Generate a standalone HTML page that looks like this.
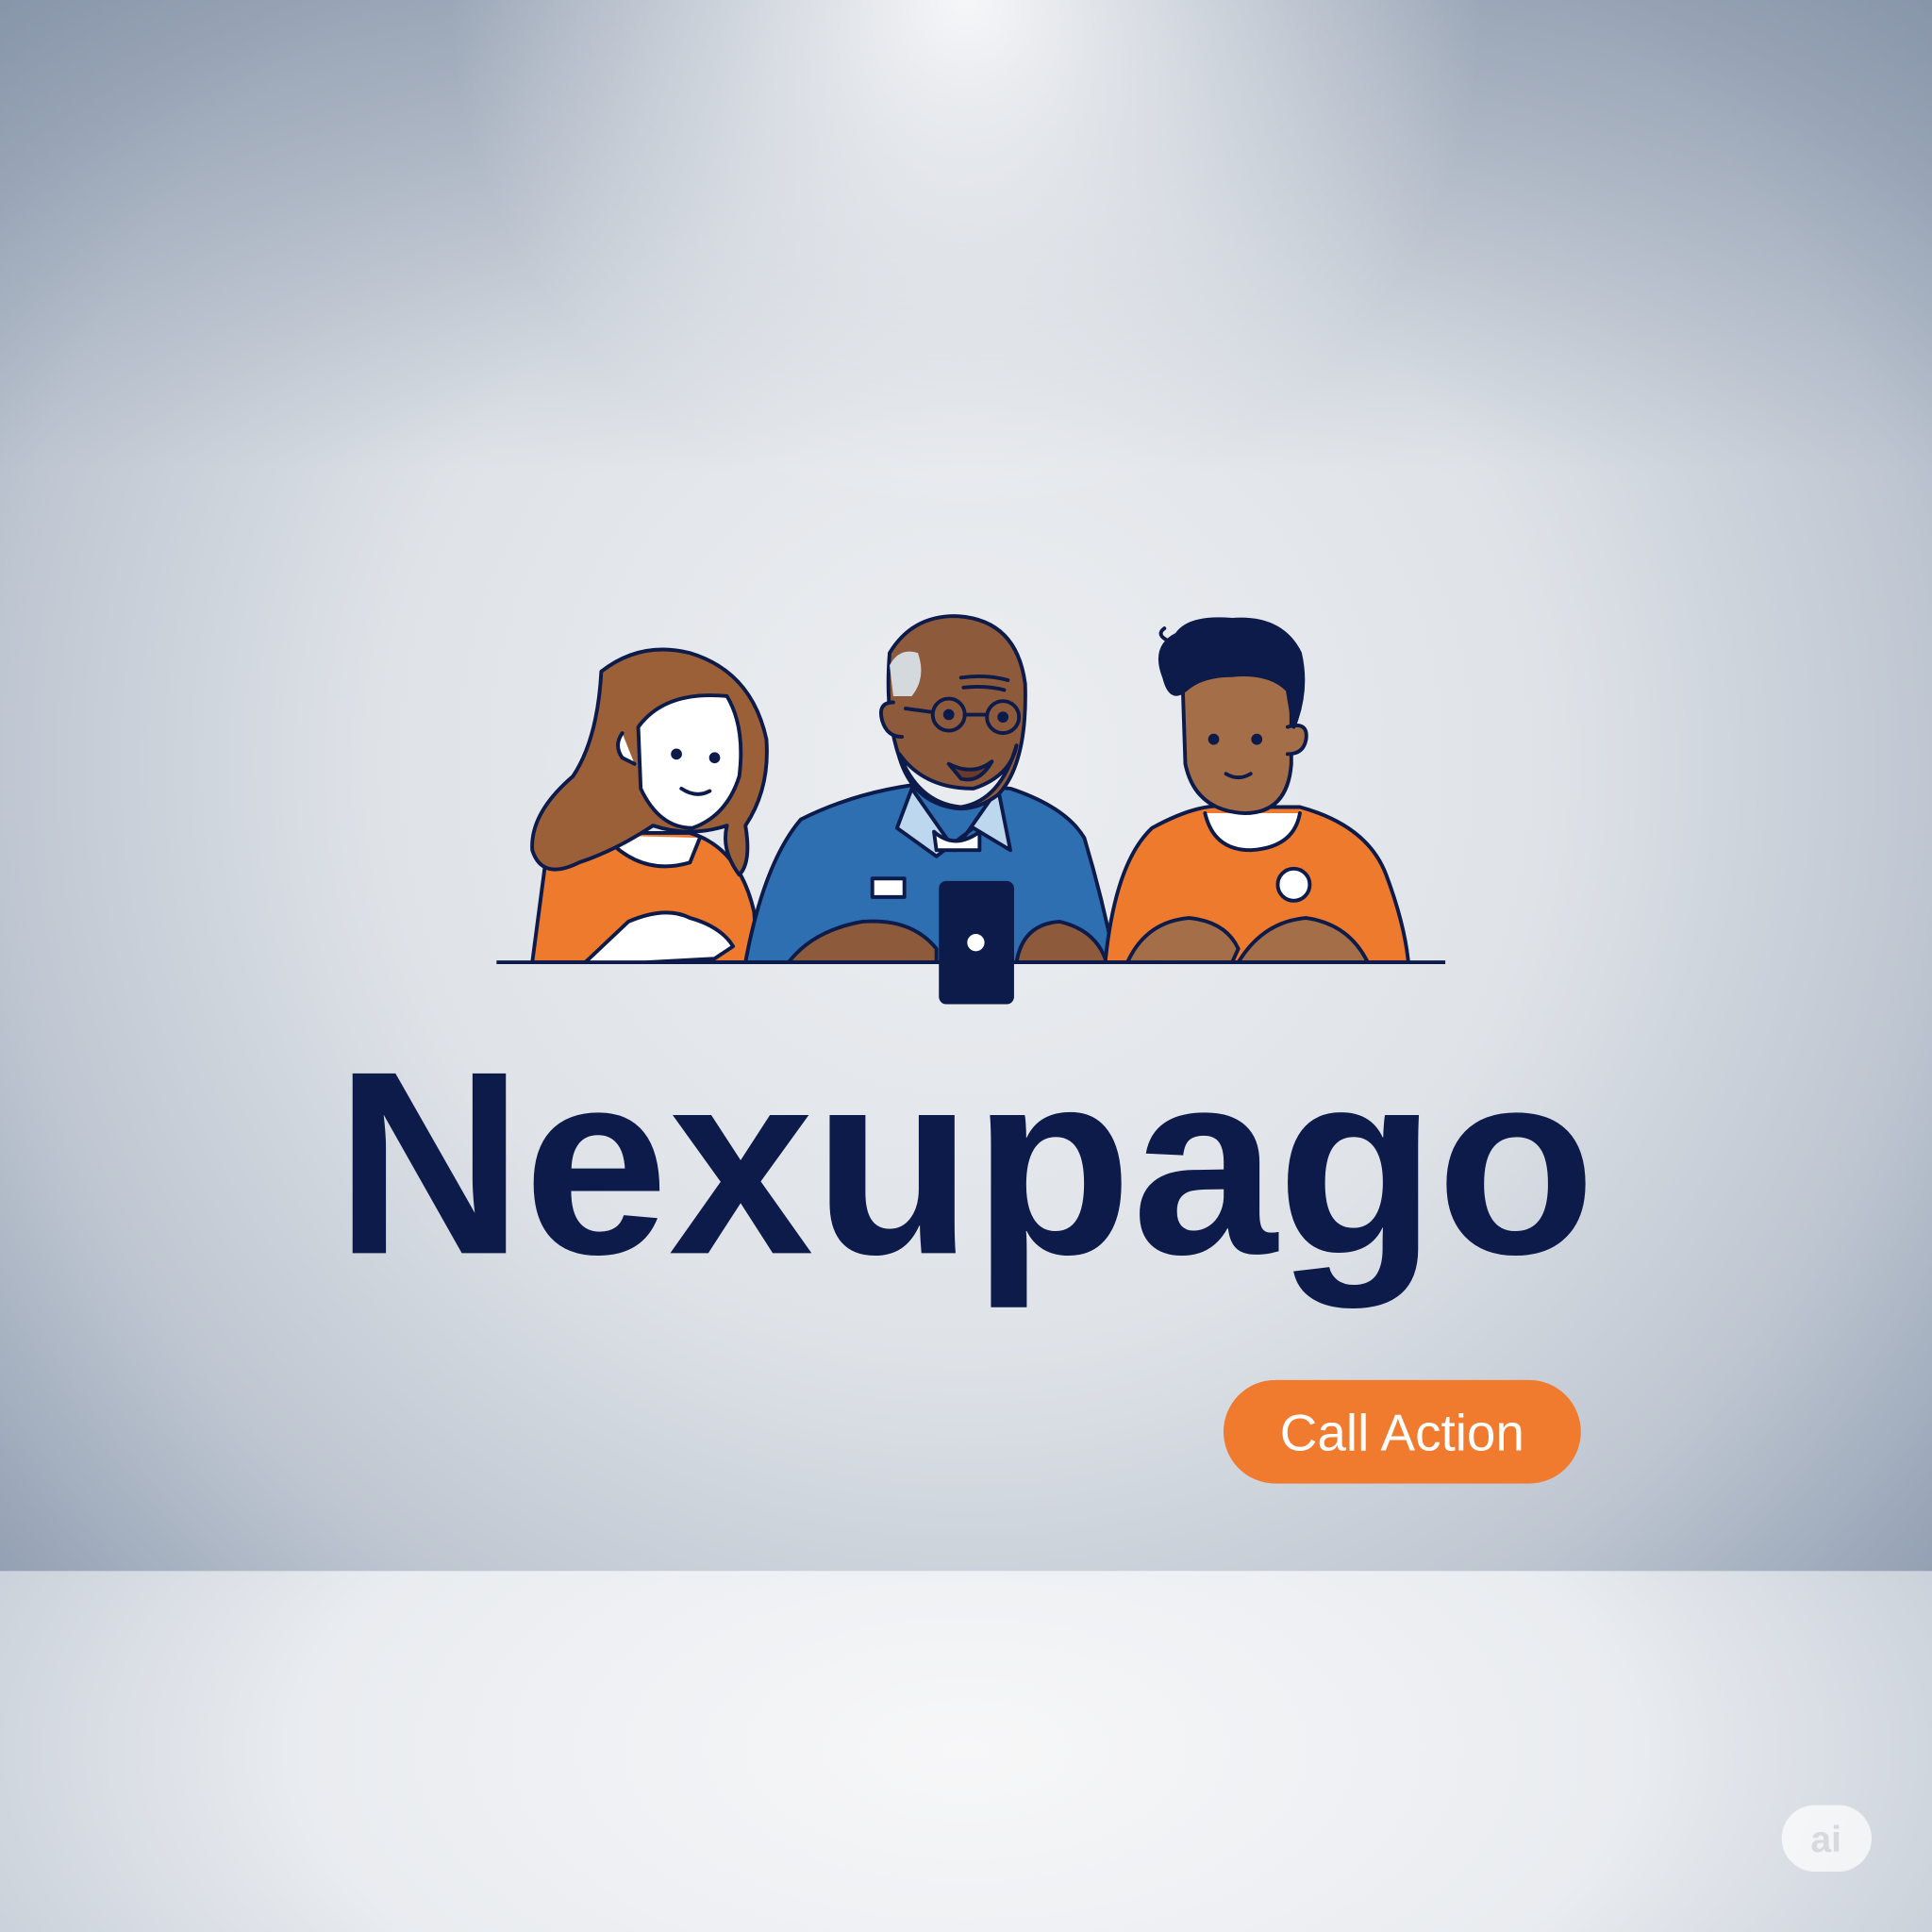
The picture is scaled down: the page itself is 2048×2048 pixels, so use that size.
<!DOCTYPE html>
<html><head><meta charset="utf-8"><style>
html,body{margin:0;padding:0;width:2048px;height:2048px;overflow:hidden}
svg{display:block}
</style></head><body>
<svg width="2048" height="2048" viewBox="0 0 1568 1568" xmlns="http://www.w3.org/2000/svg">
<defs>
<radialGradient id="bg" cx="784" cy="620" r="1050" gradientUnits="userSpaceOnUse">
<stop offset="0" stop-color="#eceef1"/>
<stop offset="0.45" stop-color="#dfe3e8"/>
<stop offset="0.75" stop-color="#bec6d1"/>
<stop offset="1" stop-color="#8e9cb0"/>
</radialGradient>
<linearGradient id="topdark" x1="0" y1="0" x2="0" y2="1">
<stop offset="0" stop-color="#7b8aa0" stop-opacity="0.55"/>
<stop offset="0.3" stop-color="#7b8aa0" stop-opacity="0"/>
</linearGradient>
<radialGradient id="spot" cx="784" cy="0" r="420" gradientUnits="userSpaceOnUse">
<stop offset="0" stop-color="#ffffff" stop-opacity="0.9"/>
<stop offset="1" stop-color="#ffffff" stop-opacity="0"/>
</radialGradient>
<radialGradient id="floor" cx="784" cy="1420" r="900" gradientUnits="userSpaceOnUse" gradientTransform="translate(784 1420) scale(1 0.5) translate(-784 -1420)">
<stop offset="0" stop-color="#f7f7f8"/>
<stop offset="0.6" stop-color="#e9ecf0"/>
<stop offset="1" stop-color="#c5ccd6"/>
</radialGradient>
</defs>
<rect width="1568" height="1568" fill="url(#bg)"/>
<rect width="1568" height="1275" fill="url(#topdark)"/>
<rect width="1568" height="600" fill="url(#spot)"/>
<rect y="1275" width="1568" height="293" fill="url(#floor)"/>

<g stroke="#0d1b4b" stroke-width="3" stroke-linejoin="round" stroke-linecap="round">
<path d="M432 781 L442 705 Q455 682 490 676 L560 676 Q600 688 612 740 L615 781 Z" fill="#ee7a2e"/>
<path d="M490 678 Q520 712 560 700 L568 680" fill="#fff"/>
<path d="M488 545 Q520 520 560 530 Q610 545 622 600 Q625 640 605 670 Q610 700 600 710 Q585 690 590 670 Q560 680 530 670 Q500 690 470 700 Q440 715 432 690 Q430 660 465 630 Q485 600 488 545 Z" fill="#9b6038"/>
<path d="M518 590 Q540 560 590 565 Q605 590 600 630 Q590 662 562 672 Q535 672 520 640 Z" fill="#fff"/>
<path d="M505 595 Q498 605 505 615 L515 620" fill="#fff"/>
<circle cx="549" cy="612" r="3" fill="#0d1b4b"/>
<circle cx="580" cy="615" r="3" fill="#0d1b4b"/>
<path d="M553 640 Q565 648 576 642" fill="none"/>
<path d="M475 781 L510 748 Q540 735 560 745 Q585 752 595 768 L580 778 L525 781" fill="#fff"/>
<path d="M605 781 Q620 700 650 665 Q700 640 760 635 L820 640 Q865 655 880 680 Q895 730 905 781 Z" fill="#2e6fb2"/>
<path d="M740 640 L775 690 L810 640 L820 690 L790 672 L760 695 L728 672 Z" fill="#bcd7ee"/>
<path d="M758 675 Q775 690 795 675 L795 690 L760 690 Z" fill="#fff"/>
<rect x="708" y="713" width="26" height="15" fill="#fff"/>
<path d="M722 530 Q740 500 775 500 Q825 502 832 555 Q834 620 810 645 Q790 660 770 655 Q740 648 730 615 Q718 580 722 530 Z" fill="#8d5b3b"/>
<path d="M730 612 Q750 640 790 640 Q820 630 825 605 Q812 650 780 655 Q745 652 730 612 Z" fill="#e8ecef"/>
<path d="M722 540 Q730 525 745 530 Q752 550 740 565 L725 565 Z" fill="#d4d9de" stroke="none"/>
<path d="M725 570 Q712 570 716 585 Q720 598 732 598" fill="#8d5b3b"/>
<circle cx="770" cy="580" r="13" fill="none"/>
<circle cx="814" cy="582" r="13" fill="none"/>
<path d="M783 580 L801 580 M757 578 L735 575" fill="none"/>
<circle cx="770" cy="580" r="3" fill="#0d1b4b"/>
<circle cx="814" cy="582" r="3" fill="#0d1b4b"/>
<path d="M770 620 Q790 630 805 618 Q795 636 780 632 Z" fill="#6b3b2a"/>
<path d="M780 550 Q800 547 818 552 M782 558 Q800 556 815 560" fill="none"/>
<path d="M640 781 Q660 755 700 748 Q740 745 760 770 L760 781 Z" fill="#8d5b3b"/>
<path d="M825 781 Q830 750 860 748 Q890 755 898 781 Z" fill="#8d5b3b"/>
<path d="M897 781 Q905 700 935 672 Q975 650 1000 655 L1055 655 Q1110 670 1125 710 Q1140 750 1143 781 Z" fill="#ee7a2e"/>
<path d="M978 660 Q985 690 1015 690 Q1050 688 1055 660" fill="#fff"/>
<path d="M960 560 Q962 520 1000 515 Q1040 515 1048 560 L1048 620 Q1045 660 1010 660 Q970 658 962 620 Z" fill="#a46e48"/>
<path d="M1045 590 Q1062 585 1060 600 Q1058 612 1045 612" fill="#a46e48"/>
<path d="M945 550 Q935 525 955 515 Q965 500 1000 503 Q1040 500 1055 530 Q1062 560 1050 590 L1045 560 Q1030 545 1000 548 Q975 548 962 560 Q950 570 945 550 Z" fill="#0d1b4b"/>
<path d="M948 520 Q938 515 945 510" fill="none"/>
<circle cx="985" cy="600" r="3" fill="#0d1b4b"/>
<circle cx="1020" cy="600" r="3" fill="#0d1b4b"/>
<path d="M995 628 Q1005 634 1015 628" fill="none"/>
<circle cx="1050" cy="718" r="13" fill="#fff"/>
<path d="M915 781 Q930 748 965 745 Q995 748 1005 770 L1000 781 Z" fill="#a46e48"/>
<path d="M1005 781 Q1025 748 1060 745 Q1095 750 1110 781 Z" fill="#a46e48"/>
</g>
<line x1="403" y1="781" x2="1173" y2="781" stroke="#0d1b4b" stroke-width="3"/>
<rect x="762" y="715" width="61" height="100" rx="6" fill="#0d1b4b"/>
<circle cx="792" cy="765" r="7" fill="#fff"/>

<text x="272" y="1017" font-family="'Liberation Sans',sans-serif" font-weight="bold" font-size="212" fill="#0d1b4b" textLength="1023" lengthAdjust="spacingAndGlyphs">Nexupago</text>

<rect x="993" y="1120" width="290" height="84" rx="42" fill="#f07a2e"/>
<text x="1138" y="1177" text-anchor="middle" font-family="'Liberation Sans',sans-serif" font-size="42" fill="#fff">Call Action</text>

<rect x="1446" y="1465" width="73" height="54" rx="27" fill="#fff" fill-opacity="0.7"/>
<text x="1482" y="1503" text-anchor="middle" font-family="'Liberation Sans',sans-serif" font-weight="bold" font-size="30" fill="#d6d9de">ai</text>
</svg>
</body></html>
